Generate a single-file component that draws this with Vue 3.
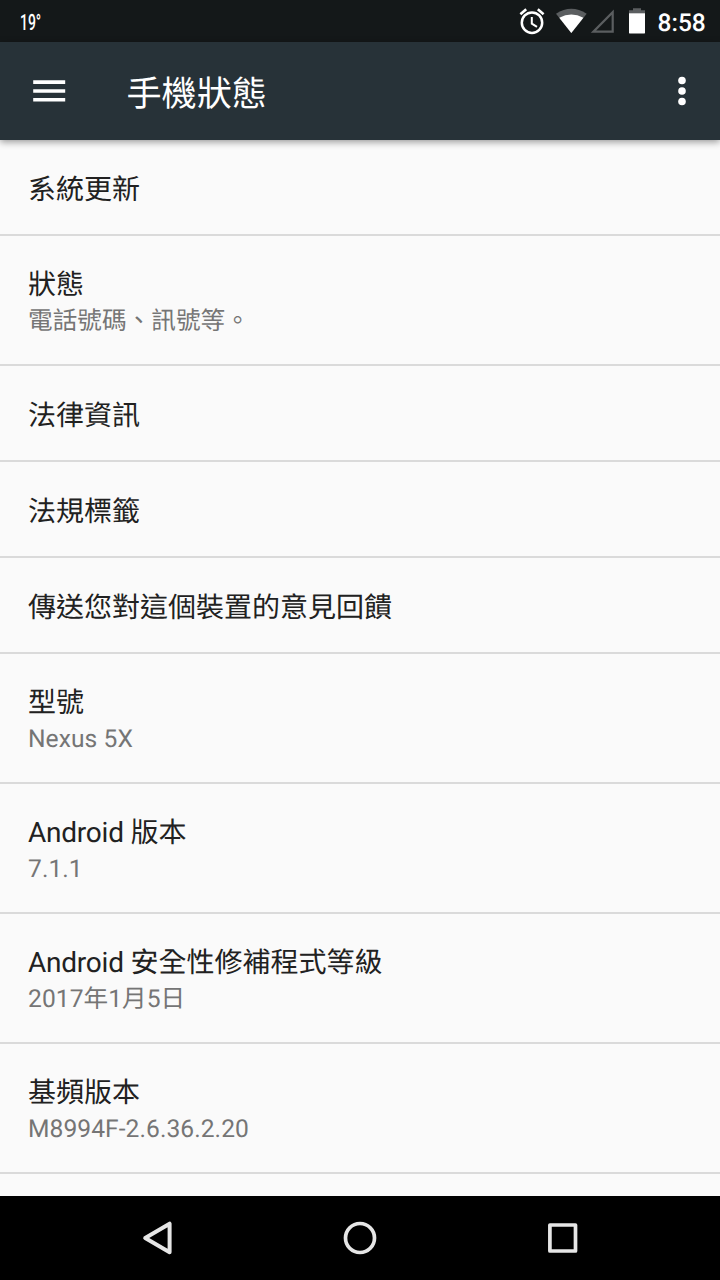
<script setup>
const rows = [
  { title: '系統更新' },
  { title: '狀態', summary: '電話號碼、訊號等。' },
  { title: '法律資訊' },
  { title: '法規標籤' },
  { title: '傳送您對這個裝置的意見回饋' },
  { title: '型號', summary: 'Nexus 5X' },
  { product: 'Android ', title: '版本', summary: '7.1.1' },
  { product: 'Android ', title: '安全性修補程式等級', summary: '2017年1月5日' },
  { title: '基頻版本', summary: 'M8994F-2.6.36.2.20' },
]
</script>

<template>
  <div class="screen">
    <header class="status">
      <span class="temp">19°</span>
      <svg class="tray" width="140" height="42" viewBox="510 0 140 42">
        <g fill="none" stroke="#fff">
          <circle cx="532" cy="22.7" r="10.2" stroke-width="2.5" />
          <path d="M531.8 17V23.6L537 26.9" stroke-width="2" />
          <path d="M520.4 14.2L526.2 9.3M543.6 14.2L537.8 9.3" stroke-width="2.6" />
        </g>
        <path d="M556 13.7Q571.3 3.7 586.7 13.7L571.3 33Z" fill="#5b5e60" />
        <path d="M559.3 17.8Q571.3 11.2 583.4 17.8L571.3 33Z" fill="#fff" />
        <path d="M593.4 31.6H612.7V12.2Z" fill="none" stroke="#5b5e60" stroke-width="2.2" />
        <path d="M629 13.5V10.3H633V8.2H641V10.3H645V13.5Z" fill="#5b5e60" />
        <path d="M629 13.2H645V32.4Q645 33.6 643.8 33.6H630.2Q629 33.6 629 32.4Z" fill="#fff" />
      </svg>
      <span class="clock">8:58</span>
    </header>

    <div class="toolbar">
      <svg class="menu" width="33" height="24" viewBox="0 0 33 24">
        <path d="M0.2 3.1H32.2M0.2 12H32.2M0.2 20.8H32.2" stroke="#fff" stroke-width="3.6" />
      </svg>
      <h1>手機狀態</h1>
      <svg class="more" width="10" height="32" viewBox="0 0 10 32" fill="#fff">
        <circle cx="5" cy="5.5" r="3.8" />
        <circle cx="5" cy="16" r="3.8" />
        <circle cx="5" cy="26.5" r="3.8" />
      </svg>
    </div>

    <main class="list">
      <div v-for="row in rows" :key="row.title" class="row" :class="{ tall: row.summary }">
        <div class="title"><span v-if="row.product" class="product">{{ row.product }}</span>{{ row.title }}</div>
        <div v-if="row.summary" class="summary">{{ row.summary }}</div>
      </div>
    </main>

    <nav class="nav">
      <svg width="720" height="84" viewBox="0 0 720 84" fill="none" stroke="#e6e6e6" stroke-linejoin="round">
        <path d="M145.2 42L169.6 27.7V56.3Z" stroke-width="4" />
        <circle cx="360" cy="42" r="14.5" stroke-width="3.7" />
        <rect x="549.9" y="29" width="25.6" height="26" stroke-width="3.7" />
      </svg>
    </nav>
  </div>
</template>

<style>
body {
  margin: 0;
  background: #fafafa;
}
</style>

<style scoped>
.screen {
  display: flex;
  flex-direction: column;
  width: 720px;
  height: 1280px;
  overflow: hidden;
  background: #fafafa;
  font-family: Roboto, "Noto Sans CJK TC", sans-serif;
  text-rendering: geometricPrecision;
}
.status {
  display: flex;
  flex: none;
  align-items: center;
  height: 42px;
  background: #141819;
  color: #fff;
}
.temp {
  width: 40px;
  margin-left: 20px;
  font-size: 22.5px;
  font-weight: 500;
  line-height: 40px;
  padding-top: 4px;
  transform: scaleX(0.62);
  transform-origin: left center;
}
.tray {
  margin-left: 450px;
}
.clock {
  margin-left: 7.5px;
  padding-top: 3px;
  font-size: 24.5px;
  font-weight: 500;
  line-height: 40px;
}
.toolbar {
  display: flex;
  flex: none;
  align-items: center;
  position: relative;
  height: 98px;
  background: #273238;
  color: #fff;
  box-shadow: 0 2px 7px rgba(0, 0, 0, 0.4);
}
.menu {
  margin-left: 33px;
}
h1 {
  margin: 0 0 0 60.5px;
  padding-top: 5px;
  font-size: 35.1px;
  font-weight: 400;
  line-height: 50px;
}
.more {
  margin-left: auto;
  margin-right: 33px;
}
.list {
  flex: 1;
  min-height: 0;
  overflow: hidden;
}
.row {
  display: flex;
  flex-direction: column;
  justify-content: center;
  box-sizing: border-box;
  height: 96px;
  padding-top: 5px;
  padding-left: 28px;
  border-bottom: 2px solid #dadada;
}
.tall {
  height: 130px;
  padding-top: 5px;
}
.title {
  color: #212121;
  font-size: 28px;
  line-height: 38px;
}
.product {
  letter-spacing: -0.22px;
}
.summary {
  color: #757575;
  font-size: 24.6px;
  letter-spacing: 0.06px;
  line-height: 35px;
}
.nav {
  flex: none;
  height: 84px;
  background: #000;
}
.nav svg {
  display: block;
}
</style>
